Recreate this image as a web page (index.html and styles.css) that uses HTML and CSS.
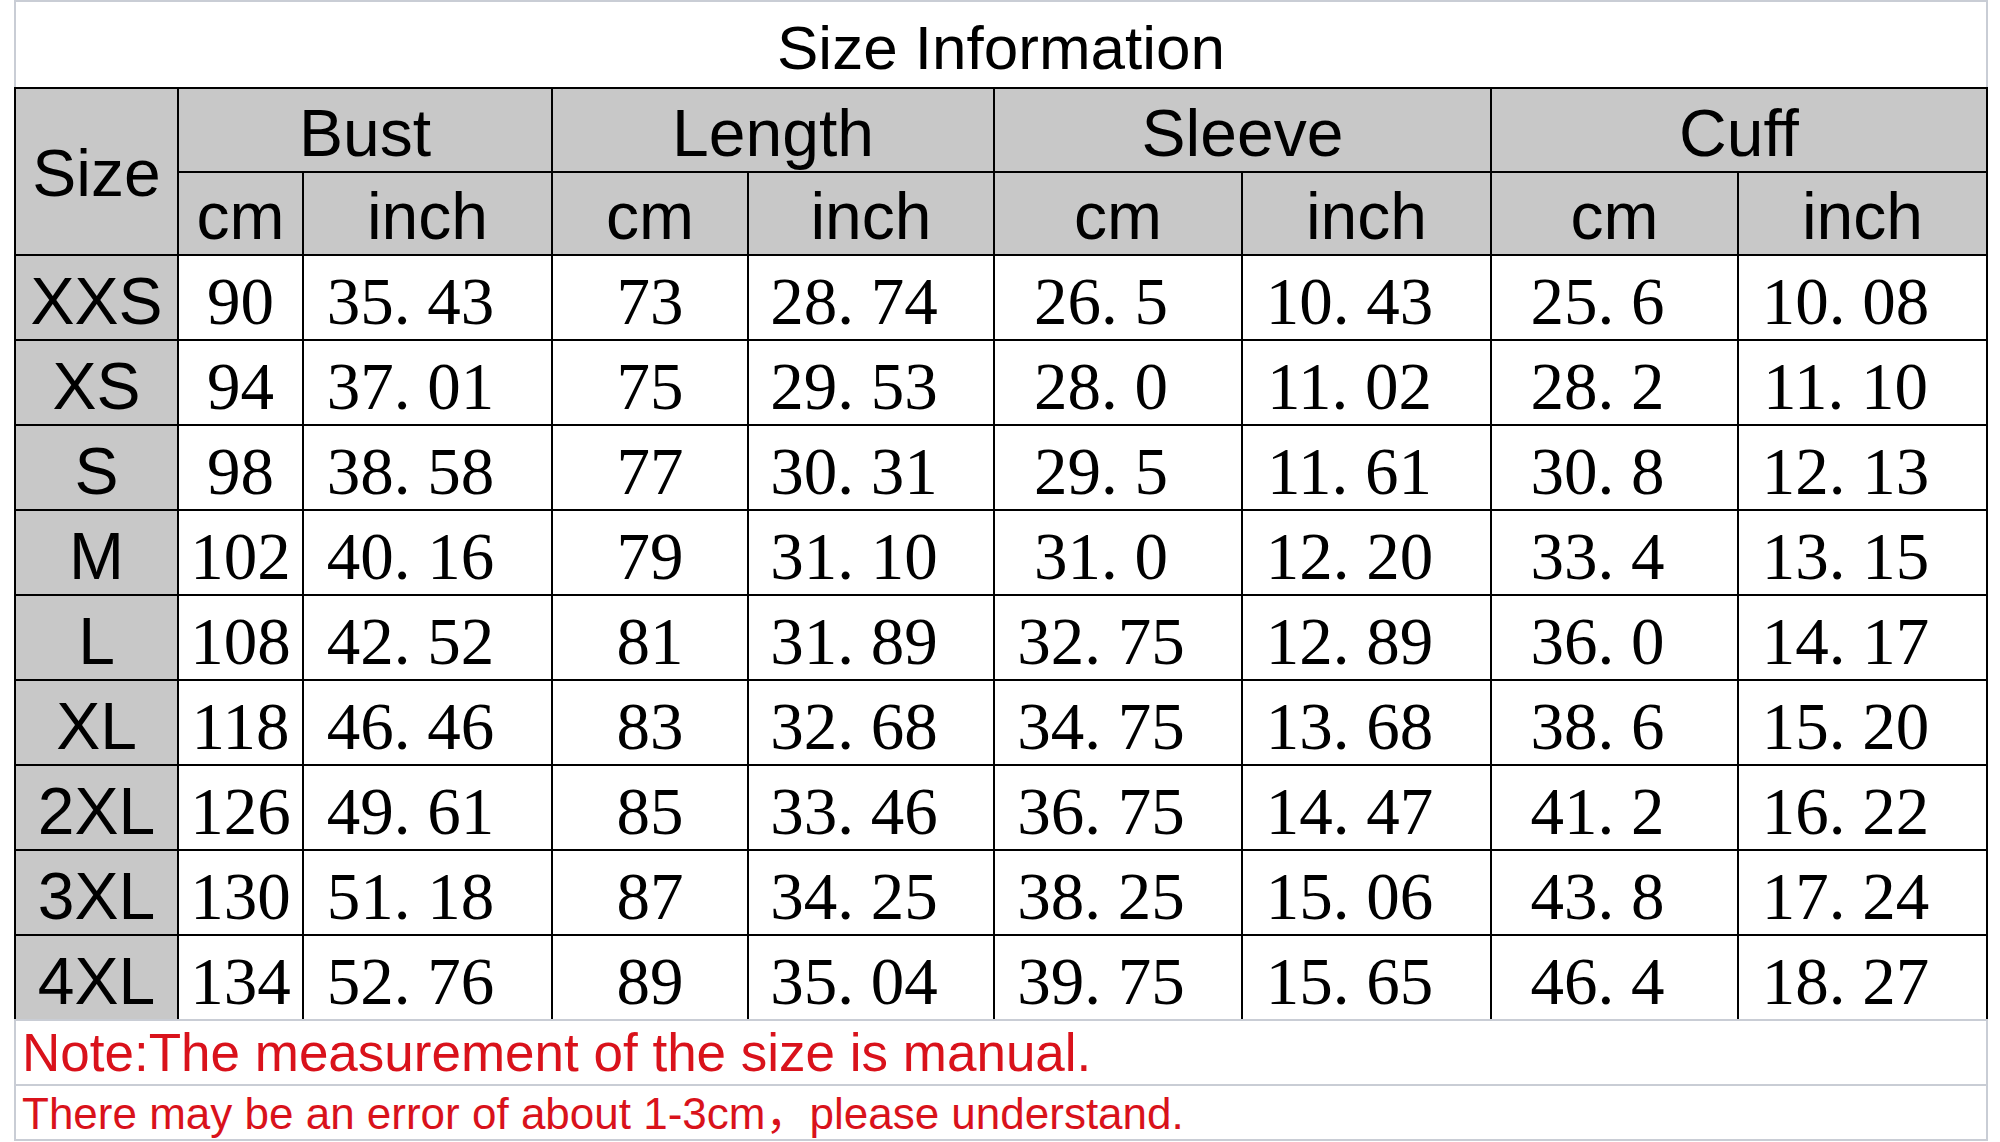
FILE: index.html
```html
<!DOCTYPE html>
<html>
<head>
<meta charset="utf-8">
<title>Size Information</title>
<link rel="stylesheet" href="styles.css">
</head>
<body>
<div class="sheet">
  <div class="title">Size Information</div>
  <div class="grid">
    <div class="h size-h">Size</div>
    <div class="h grp">Bust</div>
    <div class="h grp">Length</div>
    <div class="h grp">Sleeve</div>
    <div class="h grp">Cuff</div>
    <div class="h sub">cm</div><div class="h sub">inch</div>
    <div class="h sub">cm</div><div class="h sub">inch</div>
    <div class="h sub">cm</div><div class="h sub">inch</div>
    <div class="h sub">cm</div><div class="h sub">inch</div>

    <div class="lbl">XXS</div><div class="v">90</div><div class="v d">35<span class="dt">.</span>43</div><div class="v">73</div><div class="v d">28<span class="dt">.</span>74</div><div class="v d">26<span class="dt">.</span>5</div><div class="v d">10<span class="dt">.</span>43</div><div class="v d">25<span class="dt">.</span>6</div><div class="v d">10<span class="dt">.</span>08</div>
    <div class="lbl">XS</div><div class="v">94</div><div class="v d">37<span class="dt">.</span>01</div><div class="v">75</div><div class="v d">29<span class="dt">.</span>53</div><div class="v d">28<span class="dt">.</span>0</div><div class="v d">11<span class="dt">.</span>02</div><div class="v d">28<span class="dt">.</span>2</div><div class="v d">11<span class="dt">.</span>10</div>
    <div class="lbl">S</div><div class="v">98</div><div class="v d">38<span class="dt">.</span>58</div><div class="v">77</div><div class="v d">30<span class="dt">.</span>31</div><div class="v d">29<span class="dt">.</span>5</div><div class="v d">11<span class="dt">.</span>61</div><div class="v d">30<span class="dt">.</span>8</div><div class="v d">12<span class="dt">.</span>13</div>
    <div class="lbl">M</div><div class="v">102</div><div class="v d">40<span class="dt">.</span>16</div><div class="v">79</div><div class="v d">31<span class="dt">.</span>10</div><div class="v d">31<span class="dt">.</span>0</div><div class="v d">12<span class="dt">.</span>20</div><div class="v d">33<span class="dt">.</span>4</div><div class="v d">13<span class="dt">.</span>15</div>
    <div class="lbl">L</div><div class="v">108</div><div class="v d">42<span class="dt">.</span>52</div><div class="v">81</div><div class="v d">31<span class="dt">.</span>89</div><div class="v d">32<span class="dt">.</span>75</div><div class="v d">12<span class="dt">.</span>89</div><div class="v d">36<span class="dt">.</span>0</div><div class="v d">14<span class="dt">.</span>17</div>
    <div class="lbl">XL</div><div class="v">118</div><div class="v d">46<span class="dt">.</span>46</div><div class="v">83</div><div class="v d">32<span class="dt">.</span>68</div><div class="v d">34<span class="dt">.</span>75</div><div class="v d">13<span class="dt">.</span>68</div><div class="v d">38<span class="dt">.</span>6</div><div class="v d">15<span class="dt">.</span>20</div>
    <div class="lbl">2XL</div><div class="v">126</div><div class="v d">49<span class="dt">.</span>61</div><div class="v">85</div><div class="v d">33<span class="dt">.</span>46</div><div class="v d">36<span class="dt">.</span>75</div><div class="v d">14<span class="dt">.</span>47</div><div class="v d">41<span class="dt">.</span>2</div><div class="v d">16<span class="dt">.</span>22</div>
    <div class="lbl">3XL</div><div class="v">130</div><div class="v d">51<span class="dt">.</span>18</div><div class="v">87</div><div class="v d">34<span class="dt">.</span>25</div><div class="v d">38<span class="dt">.</span>25</div><div class="v d">15<span class="dt">.</span>06</div><div class="v d">43<span class="dt">.</span>8</div><div class="v d">17<span class="dt">.</span>24</div>
    <div class="lbl">4XL</div><div class="v">134</div><div class="v d">52<span class="dt">.</span>76</div><div class="v">89</div><div class="v d">35<span class="dt">.</span>04</div><div class="v d">39<span class="dt">.</span>75</div><div class="v d">15<span class="dt">.</span>65</div><div class="v d">46<span class="dt">.</span>4</div><div class="v d">18<span class="dt">.</span>27</div>
  </div>
  <div class="note note1">Note:The measurement of the size is manual.</div>
  <div class="note note2">There may be an error of about 1-3cm，please understand.</div>
</div>
</body>
</html>
```

FILE: styles.css
```css
html, body {
  margin: 0;
  padding: 0;
  background: #ffffff;
}

.sheet {
  width: 1974px;
  margin-left: 14px;
  font-family: "Liberation Sans", Arial, sans-serif;
  color: #000;
}

.title {
  box-sizing: border-box;
  height: 87px;
  border: 2px solid #c9cdd5;
  border-bottom: none;
  padding-top: 15px;
  font-size: 62px;
  line-height: 62px;
  text-align: center;
}

.grid {
  display: grid;
  grid-template-columns: 161px 123px 247px 194px 244px 246px 247px 245px 247px;
  grid-template-rows: 82px 81px repeat(9, 83px);
  gap: 2px;
  padding: 2px 2px 0 2px;
  background: #000;
}

.grid > div {
  display: flex;
  align-items: center;
  justify-content: center;
  box-sizing: border-box;
  white-space: nowrap;
}

.h {
  background: #c8c8c8;
  font-size: 66px;
  line-height: 66px;
}

.size-h {
  grid-row: 1 / span 2;
  padding-top: 2px;
}

.grp {
  grid-column: span 2;
  padding-top: 5px;
}

.sub {
  padding-top: 5px;
}

.lbl {
  background: #c8c8c8;
  font-size: 66px;
  line-height: 66px;
  padding-top: 6px;
}

.v {
  background: #ffffff;
  font-family: "Liberation Serif", "Times New Roman", serif;
  font-size: 67px;
  line-height: 67px;
  padding-top: 8px;
}

.v.d {
  padding-right: 34px;
}

.dt {
  display: inline-block;
  width: 0.5em;
  text-align: left;
}

.note {
  box-sizing: border-box;
  border-left: 2px solid #c9cdd5;
  border-right: 2px solid #c9cdd5;
  border-top: 2px solid #c9cdd5;
  color: #d9121b;
  padding-left: 6px;
  white-space: nowrap;
}

.note1 {
  height: 65px;
  font-size: 53px;
  line-height: 53px;
  padding-top: 5px;
}

.note2 {
  height: 57px;
  border-bottom: 2px solid #c9cdd5;
  font-family: "Liberation Sans", "Noto Sans CJK SC", sans-serif;
  font-size: 44px;
  line-height: 44px;
  padding-top: 6px;
}
```
